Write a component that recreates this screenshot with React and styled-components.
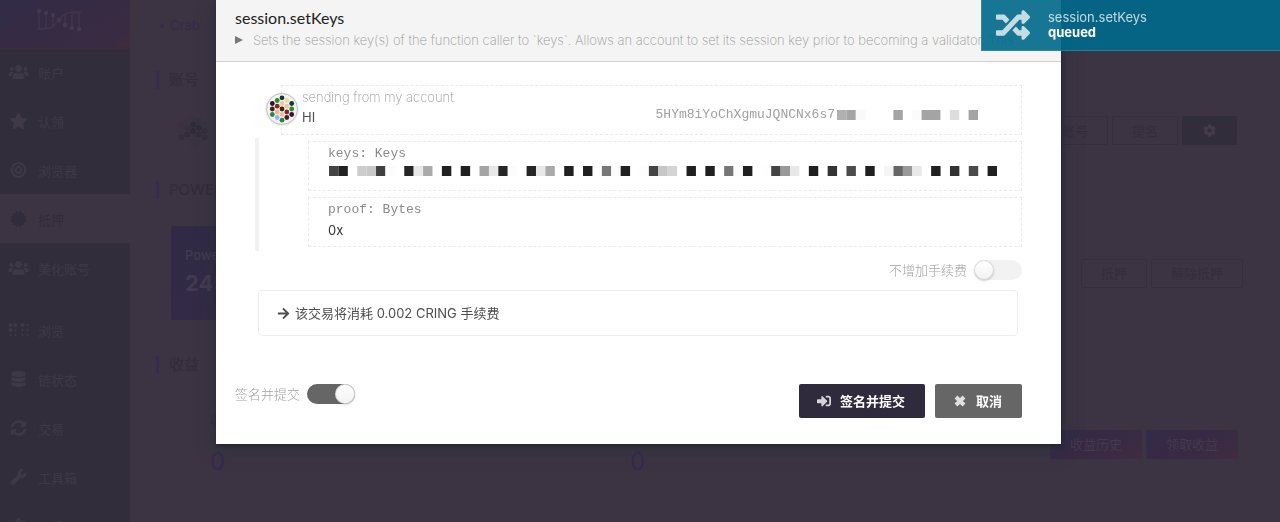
import React from "react";
import styled, { createGlobalStyle } from "styled-components";
import {
  FaUsers, FaStar, FaBullseye, FaCertificate, FaBraille, FaDatabase, FaSyncAlt,
  FaWrench, FaCog, FaRandom, FaArrowRight, FaSignInAlt,
} from "react-icons/fa";

const sans = `Inter, "Noto Sans CJK SC", sans-serif`;

const GlobalStyle = createGlobalStyle`
  * { box-sizing: border-box; }
  body { margin: 0; background: #3c3442; font: 13px/20px ${sans}; }
  button, input { font: inherit; margin: 0; }
  p { margin: 0; }
`;

const Page = styled.div`
  display: flex;
  height: 100vh;
  overflow: hidden;
`;

const Sidebar = styled.aside`
  flex: 0 0 130px;
  background: #322d3b;
`;

const Brand = styled.div`
  display: flex;
  justify-content: center;
  height: 47px;
  padding: 8px 12px 0 0;
  background: linear-gradient(150deg, #302d47 0%, #352b45 30%, #392b42 85%, #422b3e 100%);
  box-shadow: 0 2px #392b42;
`;

const NavList = styled.nav`
  display: flex;
  flex-direction: column;
`;

const NavLink = styled.a`
  display: flex;
  align-items: center;
  gap: 9px;
  height: 49px;
  padding: 3px 0 0 8px;
  margin-top: ${(p) => (p.$spaced ? 13 : 0)}px;
  color: ${(p) => (p.$active ? "#312c3b" : "#3f3947")};
  background: ${(p) => (p.$active ? "#3c3442" : "transparent")};
  text-decoration: none;

  svg { width: 21px; height: 16px; flex: none; margin-bottom: 2px; }
`;

const Main = styled.main`
  flex: 1;
  min-width: 0;
  padding-left: 26px;
  color: #322c3b;
`;

const Crumb = styled.ul`
  margin: 0;
  padding: 15px 0 15px 14px;
  list-style: none;
  color: #352b4b;

  li::before { content: "•"; display: inline-block; width: 10px; margin-left: -12px; margin-right: 2px; }
`;

const SectionTitle = styled.h2`
  margin: ${(p) => (p.$first ? 21 : 36)}px 0 27px;
  padding-left: 10px;
  border-left: 3px solid #382b4d;
  font-size: 15px;
  font-weight: 500;
  line-height: 18px;
`;

const SectionRow = styled.div`
  display: flex;
  align-items: center;
  gap: 4px;
  height: ${(p) => p.$height}px;
  padding: 0 ${(p) => p.$end}px 0 ${(p) => p.$start}px;
`;

const PowerCard = styled.div`
  width: 300px;
  height: 94px;
  padding: 19px 14px;
  margin-right: auto;
  border-radius: 2px;
  background: linear-gradient(120deg, #302a45, #382b48 60%);
  color: #423b50;
  font-weight: 500;

  strong { display: block; margin-top: 4px; font-size: 22px; line-height: 28px; }
`;

const Stats = styled.dl`
  display: flex;
  flex: 1;
  min-width: 0;
  margin: 0;
`;

const Stat = styled.div`
  flex: 0 0 420px;

  dt { line-height: 20px; margin-bottom: 16px; }
  dd { margin: 0; color: #332b50; font-size: 24px; line-height: 32px; }
`;

const PageButton = styled.button`
  flex: none;
  width: ${(p) => p.$width}px;
  height: 29px;
  padding: 0;
  border: 1px solid ${(p) => (p.$kind === "outline" ? "#342f3e" : "transparent")};
  border-radius: 2px;
  color: ${(p) => (p.$kind === "outline" ? "#332e3d" : "#433a4b")};
  background: ${(p) =>
    ({
      outline: "transparent",
      dark: "#322d3b",
      gradient: "linear-gradient(150deg, #322c4a, #372945 40%, #3b2c41 85%, #432c40) border-box",
    })[p.$kind]};

  svg { display: block; margin: 0 auto; }
`;

const Spacer = styled.div`
  flex: 1;
`;

const Overlay = styled.div`
  position: fixed;
  inset: 0;
  padding: 0 219px 0 216px;
`;

const Dialog = styled.section`
  background: #fff;
  color: #4e4e4e;
  box-shadow: 1px 2px 3px rgba(20, 30, 35, 0.5), 1px 3px 15px 2px rgba(35, 45, 55, 0.5);
`;

const DialogHeader = styled.header`
  height: 62px;
  padding: 8px 30px 0 19px;
  border-bottom: 1px solid #d0d0d2;
  background: #f4f4f4;

  h1 { margin: 0; font: 400 16px/20px Lato, sans-serif; color: #222; }
`;

const Description = styled.summary`
  display: flex;
  align-items: center;
  gap: 10px;
  margin-top: 2px;
  color: #999;
  font-family: Inter, sans-serif;
  font-weight: 200;
  list-style: none;

  svg { flex: none; width: 8px; height: 8px; color: #777; }
  span { overflow: hidden; text-overflow: ellipsis; white-space: nowrap; }
`;

const DialogBody = styled.div`
  padding: 23px 39px 0;
`;

const SenderBox = styled.div`
  display: flex;
  height: 50px;
  margin-left: 26px;
  padding-right: 43px;
  border: 1px dashed #eaeaea;
`;

const Avatar = styled.svg`
  flex: none;
  width: 36px;
  height: 36px;
  margin: 4px 2px 0 -18px;
`;

const SenderText = styled.div`
  flex: 1;
  padding-top: 1px;

  small { display: block; font-size: 13px; font-weight: 200; color: #999; }
  strong { display: block; font-weight: 400; color: #4e4e4e; }
`;

const Address = styled.div`
  display: flex;
  align-items: center;
  gap: 2px;
  padding-top: 10px;
  font: 13px/20px "Liberation Mono", monospace;
  color: #a0a0a0;
`;

const Pixels = styled.svg`
  display: block;
  height: 10px;
`;

const Params = styled.div`
  display: flex;
  flex-direction: column;
  gap: 6px;
  margin-top: 3px;
  padding: 3px 0 4px 49px;
  border-left: 4px solid #f2f2f2;
`;

const Param = styled.div`
  height: 50px;
  padding: 2px 19px 0;
  border: 1px dashed #eaeaea;

  code { display: block; font: 13px/20px "Liberation Mono", monospace; color: #8a8a8a; }
  p { color: #333; }
  ${Pixels} { margin: 2px 0 0 1px; }
`;

const Toggle = styled.label`
  display: flex;
  align-items: center;
  justify-content: flex-end;
  gap: 7px;
  color: #a3a3a3;
  font-weight: 300;

  input {
    appearance: none;
    display: flex;
    width: 48px;
    height: 20px;
    border-radius: 10px;
    background: #f2f2f2;
  }
  input:checked { background: #666; justify-content: flex-end; }
  input::before {
    content: "";
    width: 20px;
    height: 20px;
    border-radius: 50%;
    background: linear-gradient(#fff, #f2f2f2);
    box-shadow: 0 1px 2px rgba(34, 36, 38, 0.2), inset 0 0 0 1px rgba(34, 36, 38, 0.15);
  }
`;

const TipRow = styled.div`
  padding-top: 9px;
`;

const FeeBox = styled.div`
  display: flex;
  align-items: center;
  gap: 5px;
  height: 46px;
  margin: 10px 4px 0 3px;
  padding: 0 18px;
  border: 1px solid #eee;
  border-radius: 4px;
`;

const DialogFooter = styled.footer`
  display: flex;
  align-items: flex-start;
  gap: 10px;
  padding: 48px 39px 26px 19px;

  ${Toggle} { margin-right: auto; }
`;

const ActionButton = styled.button`
  display: flex;
  align-items: center;
  gap: 9px;
  height: 34px;
  padding: 0 20px 0 18px;
  border: 0;
  border-radius: 2px;
  background: ${(p) => (p.$primary ? "#302b3c" : "#666")};
  color: #fff;
  font-weight: 700;

  svg { width: 14px; height: 14px; opacity: 0.8; }
`;

const Toast = styled.div`
  position: fixed;
  top: 0;
  right: 0;
  display: flex;
  align-items: center;
  gap: 18px;
  width: 299px;
  height: 51px;
  padding-left: 14px;
  border: 1px solid rgba(80, 150, 175, 0.5);
  border-width: 0 0 1px 1px;
  background: rgba(0, 105, 138, 0.91);
  color: rgba(255, 255, 255, 0.75);
  line-height: 15px;

  strong { display: block; color: #fff; }
`;

const dots = [
  [8.3, 13.5, "#3b0f30"], [8.3, 19, "#43240f"], [8.3, 24.5, "#1f8a50"],
  [13.2, 10.5, "#2a8a2e"], [13.2, 16.2, "#8f2424"], [13.2, 22, "#efb791"], [13.2, 27.5, "#9cb2ea"],
  [18, 7.8, "#12343c"], [18, 13.5, "#f0c9a6"], [18, 19, "#3f2410"], [18, 24.5, "#f0bd9c"], [18, 30.2, "#1f8a50"],
  [22.8, 10.5, "#e9de9a"], [22.8, 16.2, "#efc99a"], [22.8, 22, "#8c1f30"], [22.8, 27.5, "#48200f"],
  [27.7, 13.5, "#12343c"], [27.7, 19, "#2a8a2e"], [27.7, 24.5, "#3b0f30"],
];

const keyCells = [
  "444", "222", "", "ccc", "c8c8c8", "404040", "fcfcfc", "", "262626", "e8e8e8", "aaa", "", "202020", "", "202020", "",
  "a4a4a4", "e8e8e8", "262626", "fcfcfc", "", "262626", "e8e8e8", "aaa", "", "202020", "", "202020", "", "777", "fbfbfb",
  "202020", "", "fdfdfd", "444", "c6c6c6", "d4d4d4", "", "202020", "", "202020", "", "777", "fbfbfb", "202020", "",
  "fdfdfd", "444", "999", "e8e8e8", "", "202020", "", "333", "", "4c4c4c", "", "202020", "", "f5f5f5", "666", "999",
  "e8e8e8", "", "202020", "", "333", "", "4a4a4a", "", "202020",
];

const addressCells = [
  "b0b0b0", "a4a4a4", "f9f9f9", "", "", "", "a4a4a4", "", "fbfbfb", "a4a4a4", "a4a4a4", "", "ddd", "", "a4a4a4",
];

function MaskedText({ cells, width }) {
  return (
    <Pixels width={width} viewBox={`0 0 ${cells.length} 1`} preserveAspectRatio="none" aria-hidden="true">
      {cells.map((c, i) => (c ? <rect key={i} x={i} width="1" height="1" fill={`#${c}`} /> : null))}
    </Pixels>
  );
}

function Identicon() {
  return (
    <Avatar viewBox="0 0 36 36" aria-hidden="true">
      <circle cx="18" cy="19.5" r="17" fill="#000" opacity="0.06" />
      <circle cx="18" cy="19" r="15.5" fill="#f3f3f3" stroke="#c2c2c2" />
      {dots.map(([x, y, c], i) => <circle key={i} cx={x} cy={y} r="2.4" fill={c} />)}
    </Avatar>
  );
}

const fadedShades = [
  "#40303f", "#3a3340", "#332e3c", "#393246", "#35303d", "#322d3a", "#3e3141", "#39323f", "#2f2a37", "#2f2a37",
  "#39333f", "#3a3340", "#37303e", "#2f2a37", "#322d3a", "#3a3246", "#3a3340", "#332e3b", "#332e3b",
];

function FadedIdenticon() {
  return (
    <svg width="34" height="34" viewBox="1 2 34 34" aria-hidden="true">
      {dots.map(([x, y], i) => (
        <circle key={i} cx={18 + (x - 18) * 1.2} cy={19 + (y - 19) * 1.15} r="2.9" fill={fadedShades[i]} />
      ))}
    </svg>
  );
}

function Logo() {
  const rods = [[3, 3, 21], [10, 5, 21], [17, 7, 19], [23, 12, 12], [29, 6, 17], [36, 5, 20], [43, 4, 21]];
  return (
    <svg width="46" height="25" viewBox="0 0 46 25" fill="#443a4c" stroke="#443a4c" aria-hidden="true">
      {rods.map(([x, top, bottom], i) => (
        <g key={x}>
          <line x1={x} x2={x} y1={top} y2={bottom} />
          <circle cx={x} cy={i < 4 ? top : bottom} r="2.2" stroke="none" />
        </g>
      ))}
      <path d="M1 21h8C22 21 22 4 37 4h8" fill="none" />
    </svg>
  );
}

function Triangle() {
  return (
    <svg viewBox="0 0 8 8" fill="currentColor" aria-hidden="true">
      <path d="M0 0l8 4-8 4z" />
    </svg>
  );
}

function Cross() {
  return (
    <svg viewBox="0 0 14 14" fill="none" stroke="currentColor" strokeWidth="4" aria-hidden="true">
      <path d="M3 3l8 8M11 3l-8 8" />
    </svg>
  );
}

const nav = [
  { icon: FaUsers, label: "账户" },
  { icon: FaStar, label: "认领" },
  { icon: FaBullseye, label: "浏览器" },
  { icon: FaCertificate, label: "抵押", active: true },
  { icon: FaUsers, label: "美化账号" },
  { icon: FaBraille, label: "浏览", spaced: true },
  { icon: FaDatabase, label: "链状态" },
  { icon: FaSyncAlt, label: "交易" },
  { icon: FaWrench, label: "工具箱" },
  { icon: FaCog, label: "设置" },
];

export default function App() {
  return (
    <>
      <GlobalStyle />
      <Page>
        <Sidebar>
          <Brand><Logo /></Brand>
          <NavList>
            {nav.map(({ icon: Icon, label, active, spaced }) => (
              <NavLink key={label} href="#" $active={active} $spaced={spaced}>
                <Icon />
                {label}
              </NavLink>
            ))}
          </NavList>
        </Sidebar>
        <Main>
          <Crumb><li>Crab</li></Crumb>
          <SectionTitle $first>账号</SectionTitle>
          <SectionRow $height={29} $start={20} $end={43}>
            <FadedIdenticon />
            <Spacer />
            <PageButton $kind="outline" $width={92}>更换账号</PageButton>
            <PageButton $kind="outline" $width={66}>提名</PageButton>
            <PageButton $kind="dark" $width={55} aria-label="设置"><FaCog /></PageButton>
          </SectionRow>
          <SectionTitle>POWER</SectionTitle>
          <SectionRow $height={94} $start={15} $end={37}>
            <PowerCard>Power<strong>245</strong></PowerCard>
            <PageButton $kind="outline" $width={66}>抵押</PageButton>
            <PageButton $kind="outline" $width={92}>解除抵押</PageButton>
          </SectionRow>
          <SectionTitle>收益</SectionTitle>
          <SectionRow $height={86} $start={54} $end={42}>
            <Stats>
              <Stat><dt>收益</dt><dd>0</dd></Stat>
              <Stat><dt>已领取</dt><dd>0</dd></Stat>
            </Stats>
            <PageButton $kind="gradient" $width={92}>收益历史</PageButton>
            <PageButton $kind="gradient" $width={92}>领取收益</PageButton>
          </SectionRow>
        </Main>
      </Page>

      <Overlay>
        <Dialog role="dialog" aria-modal="true" aria-labelledby="dialog-title">
          <DialogHeader>
            <h1 id="dialog-title">session.setKeys</h1>
            <details>
              <Description>
                <Triangle />
                <span>
                  Sets the session key(s) of the function caller to `keys`. Allows an account to set its session key
                  prior to becoming a validator. This doesn't take effect until the next session.
                </span>
              </Description>
            </details>
          </DialogHeader>
          <DialogBody>
            <SenderBox>
              <Identicon />
              <SenderText>
                <small>sending from my account</small>
                <strong>HI</strong>
              </SenderText>
              <Address>
                5HYm8iYoChXgmuJQNCNx6s7
                <MaskedText cells={addressCells} width={141} />
              </Address>
            </SenderBox>
            <Params>
              <Param>
                <code>keys: Keys</code>
                <MaskedText cells={keyCells} width={668} />
              </Param>
              <Param>
                <code>proof: Bytes</code>
                <p>0x</p>
              </Param>
            </Params>
            <TipRow>
              <Toggle>不增加手续费<input type="checkbox" role="switch" /></Toggle>
            </TipRow>
            <FeeBox>
              <FaArrowRight />
              <span>该交易将消耗 0.002 CRING 手续费</span>
            </FeeBox>
          </DialogBody>
          <DialogFooter>
            <Toggle>签名并提交<input type="checkbox" role="switch" defaultChecked /></Toggle>
            <ActionButton $primary><FaSignInAlt />签名并提交</ActionButton>
            <ActionButton><Cross />取消</ActionButton>
          </DialogFooter>
        </Dialog>
      </Overlay>

      <Toast role="status">
        <FaRandom size={34} />
        <div>session.setKeys<strong>queued</strong></div>
      </Toast>
    </>
  );
}
